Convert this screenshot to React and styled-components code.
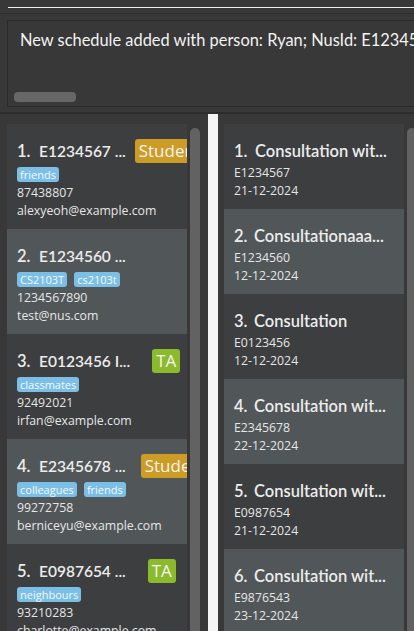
import React from 'react';
import styled, { createGlobalStyle } from 'styled-components';

const GlobalStyle = createGlobalStyle`
  html, body {
    margin: 0;
    padding: 0;
    background: #383838;
    overflow: hidden;
  }
  * { box-sizing: border-box; }
`;

const Window = styled.div`
  width: 414px;
  height: 631px;
  background: #383838;
  display: flex;
  flex-direction: column;
  overflow: hidden;
  font-family: "Open Sans", "Noto Sans", sans-serif;
  color: #ffffff;
`;

const MenuStrip = styled.div`
  height: 14px;
  padding: 7px 0 0 8px;
  border-bottom: 1px solid #2c2c2c;
`;

const MenuLine = styled.div`
  height: 1px;
  background: #f0f0f0;
`;

const ResultArea = styled.div`
  height: 100px;
  padding: 6px 0 5px 7px;
  border-bottom: 2px solid #2c2c2c;
`;

const ResultBox = styled.div`
  height: 100%;
  width: 420px;
  border: 1px solid #2a2a2a;
  background: #383838;
  padding: 7px 0 0 12px;
  display: flex;
  flex-direction: column;
  justify-content: space-between;
`;

const ResultText = styled.div`
  font-family: Lato, "Open Sans", sans-serif;
  font-size: 16.4px;
  line-height: 24px;
  white-space: nowrap;
  color: #f2f2f2;
`;

const HScroll = styled.div`
  width: 62px;
  height: 10px;
  border-radius: 4px;
  background: #676767;
  margin: 0 0 4px -6px;
`;

const Split = styled.div`
  flex: 1;
  display: flex;
  min-height: 0;
`;

const Pane = styled.div`
  width: ${p => p.$width}px;
  flex: none;
  display: flex;
  padding: 10px 0 0 ${p => p.$left}px;
  overflow: hidden;
`;

const Divider = styled.div`
  width: 10px;
  flex: none;
  background: #f4f4f4;
`;

const List = styled.div`
  width: 180px;
  flex: none;
  display: flex;
  flex-direction: column;
`;

const VScroll = styled.div`
  width: 10px;
  flex: none;
  margin: 4px 0 0 3px;
  border-radius: 5px 5px 0 0;
  background: #626262;
`;

const Card = styled.div`
  height: ${p => p.$h}px;
  flex: none;
  overflow: hidden;
  background: ${p => (p.$odd ? '#515658' : '#3c3e3f')};
  padding: ${p => p.$pad};
`;

const TitleRow = styled.div`
  display: flex;
  align-items: center;
  height: ${p => p.$h}px;
  white-space: nowrap;
`;

const Index = styled.span`
  font-family: Lato, "Open Sans", sans-serif;
  font-size: 16.5px;
  font-weight: 600;
  color: #ececec;
  width: ${p => p.$w}px;
  flex: none;
`;

const Name = styled.span`
  font-family: Lato, "Open Sans", sans-serif;
  font-size: ${p => p.$size}px;
  font-weight: 600;
  color: #ececec;
  flex: none;
`;

const Badge = styled.span`
  flex: none;
  margin-left: ${p => p.$gap}px;
  height: 24px;
  padding: 0 4px;
  border-radius: 3px;
  font-size: 17px;
  line-height: 24px;
  font-weight: 500;
  color: #f4f4f4;
  background: ${p => (p.$kind === 'TA' ? '#8cba2d' : '#cd9c24')};
`;

const Tags = styled.div`
  display: flex;
  gap: 7px;
  margin-top: 4px;
`;

const Tag = styled.span`
  height: 15px;
  padding: 0 3px;
  border-radius: 3px;
  background: #7bbfe6;
  color: #f4f8fb;
  font-size: 11px;
  line-height: 15px;
`;

const Detail = styled.div`
  font-size: 12.3px;
  line-height: 18px;
  color: #e6e6e6;
  white-space: nowrap;
  margin-top: ${p => p.$mt || 0}px;
`;

const persons = [
  { name: 'E1234567 ...', role: 'Student', gap: 9, tags: ['friends'], phone: '87438807', email: 'alexyeoh@example.com' },
  { name: 'E1234560 ...', tags: ['CS2103T', 'cs2103t'], phone: '1234567890', email: 'test@nus.com' },
  { name: 'E0123456 I...', role: 'TA', gap: 22, tags: ['classmates'], phone: '92492021', email: 'irfan@example.com' },
  { name: 'E2345678 ...', role: 'Student', gap: 15, tags: ['colleagues', 'friends'], phone: '99272758', email: 'berniceyu@example.com' },
  { name: 'E0987654 ...', role: 'TA', gap: 22, tags: ['neighbours'], phone: '93210283', email: 'charlotte@example.com' },
];

const schedules = [
  { title: 'Consultation wit...', id: 'E1234567', date: '21-12-2024' },
  { title: 'Consultationaaa...', id: 'E1234560', date: '12-12-2024' },
  { title: 'Consultation', id: 'E0123456', date: '12-12-2024' },
  { title: 'Consultation wit...', id: 'E2345678', date: '22-12-2024' },
  { title: 'Consultation wit...', id: 'E0987654', date: '21-12-2024' },
  { title: 'Consultation wit...', id: 'E9876543', date: '23-12-2024' },
];

function PersonCard({ person, index }) {
  return (
    <Card $h={105} $odd={index % 2 === 1} $pad="15px 0 0 10px">
      <TitleRow $h={24}>
        <Index $w={22}>{index + 1}.</Index>
        <Name $size={15.5}>{person.name}</Name>
        {person.role && <Badge $kind={person.role} $gap={person.gap}>{person.role}</Badge>}
      </TitleRow>
      <Tags>
        {person.tags.map(t => <Tag key={t}>{t}</Tag>)}
      </Tags>
      <Detail $mt={2}>{person.phone}</Detail>
      <Detail>{person.email}</Detail>
    </Card>
  );
}

function ScheduleCard({ schedule, index }) {
  return (
    <Card $h={85} $odd={index % 2 === 1} $pad="16px 0 0 10px">
      <TitleRow $h={22}>
        <Index $w={index === 0 ? 21 : 20}>{index + 1}.</Index>
        <Name $size={16.5}>{schedule.title}</Name>
      </TitleRow>
      <Detail $mt={2}>{schedule.id}</Detail>
      <Detail>{schedule.date}</Detail>
    </Card>
  );
}

export default function App() {
  return (
    <>
      <GlobalStyle />
      <Window>
        <MenuStrip><MenuLine /></MenuStrip>
        <ResultArea>
          <ResultBox>
            <ResultText>New schedule added with person: Ryan; NusId: E1234567</ResultText>
            <HScroll />
          </ResultBox>
        </ResultArea>
        <Split>
          <Pane $width={208} $left={7}>
            <List>
              {persons.map((p, i) => <PersonCard key={i} person={p} index={i} />)}
            </List>
            <VScroll />
          </Pane>
          <Divider />
          <Pane $width={196} $left={6}>
            <List>
              {schedules.map((s, i) => <ScheduleCard key={i} schedule={s} index={i} />)}
            </List>
            <VScroll />
          </Pane>
        </Split>
      </Window>
    </>
  );
}
